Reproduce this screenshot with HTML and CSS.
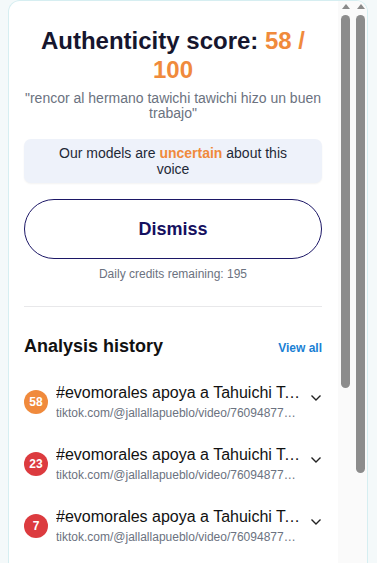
FILE: index.html
```html
<!DOCTYPE html>
<html lang="en">
<head>
  <meta charset="UTF-8">
  <meta name="viewport" content="width=device-width, initial-scale=1.0">
  <title>Authenticity score</title>
  <link rel="stylesheet" href="styles.css">
</head>
<body>
  <div class="card">
    <div class="content">
      <h1 class="score-title">Authenticity score: <span class="score">58 / 100</span></h1>
      <p class="quote">"rencor al hermano tawichi tawichi hizo un buen trabajo"</p>
      <div class="verdict">Our models are <strong>uncertain</strong> about this voice</div>
      <button class="dismiss">Dismiss</button>
      <p class="credits">Daily credits remaining: 195</p>
      <hr class="divider">
      <div class="history-head">
        <h2>Analysis history</h2>
        <a href="#" class="view-all">View all</a>
      </div>
      <ul class="history">
        <li class="item">
          <span class="badge orange">58</span>
          <div class="item-text">
            <div class="item-title">#evomorales apoya a Tahuichi Tahuichi Aguilera</div>
            <div class="item-url">tiktok.com/@jallallapueblo/video/7609487712345678901</div>
          </div>
          <svg class="chevron" width="12" height="8" viewBox="0 0 12 8"><path d="M1.5 1.5 L6 6 L10.5 1.5" fill="none" stroke="#222" stroke-width="1.4"/></svg>
        </li>
        <li class="item">
          <span class="badge red">23</span>
          <div class="item-text">
            <div class="item-title">#evomorales apoya a Tahuichi Tahuichi Aguilera</div>
            <div class="item-url">tiktok.com/@jallallapueblo/video/7609487712345678901</div>
          </div>
          <svg class="chevron" width="12" height="8" viewBox="0 0 12 8"><path d="M1.5 1.5 L6 6 L10.5 1.5" fill="none" stroke="#222" stroke-width="1.4"/></svg>
        </li>
        <li class="item">
          <span class="badge red">7</span>
          <div class="item-text">
            <div class="item-title">#evomorales apoya a Tahuichi Tahuichi Aguilera</div>
            <div class="item-url">tiktok.com/@jallallapueblo/video/7609487712345678901</div>
          </div>
          <svg class="chevron" width="12" height="8" viewBox="0 0 12 8"><path d="M1.5 1.5 L6 6 L10.5 1.5" fill="none" stroke="#222" stroke-width="1.4"/></svg>
        </li>
      </ul>
    </div>
    <div class="scrollbar">
      <span class="arrow"></span>
      <span class="thumb inner-thumb"></span>
    </div>
    <div class="scrollbar">
      <span class="arrow"></span>
      <span class="thumb outer-thumb"></span>
    </div>
  </div>
</body>
</html>
```

FILE: styles.css
```css
body {
  margin: 0;
  background-color: #f4f9fa;
  font-family: 'Liberation Sans', Arial, sans-serif;
  overflow: hidden;
}
.card {
  display: flex;
  margin-left: 8px;
  width: 360px;
  height: 563px;
  box-sizing: border-box;
  background: #fff;
  border: 1px solid #d6eef1;
  border-bottom: none;
  border-radius: 12px 12px 0 0;
  overflow: hidden;
}
.content {
  width: 329px;
  padding: 25px 16px 0 15px;
  box-sizing: border-box;
  flex-shrink: 0;
}
.score-title {
  margin: 0;
  text-align: center;
  font-size: 24px;
  line-height: 29px;
  font-weight: bold;
  color: #16162e;
}
.score {
  color: #f08a3c;
}
.quote {
  margin: 7px 0 0;
  text-align: center;
  font-size: 14px;
  line-height: 15px;
  color: #6b7280;
}
.verdict {
  margin-top: 18px;
  padding: 6px 20px;
  background: #eef2fa;
  border-radius: 7px;
  box-shadow: 0 1px 2px rgba(0, 0, 0, 0.05);
  text-align: center;
  font-size: 14px;
  line-height: 16px;
  color: #1f2937;
}
.verdict strong {
  color: #f08a3c;
}
.dismiss {
  display: block;
  width: 100%;
  height: 60px;
  margin-top: 16px;
  background: #fff;
  border: 1px solid #1c1766;
  border-radius: 30px;
  font-family: inherit;
  font-size: 18px;
  font-weight: bold;
  color: #15105f;
  cursor: pointer;
}
.credits {
  margin: 8px 0 0;
  text-align: center;
  font-size: 12px;
  line-height: 14px;
  color: #6b7280;
}
.divider {
  margin: 25px 0 0;
  border: none;
  border-top: 1px solid #e8e8ea;
}
.history-head {
  display: flex;
  justify-content: space-between;
  align-items: baseline;
  margin-top: 28px;
}
.history-head h2 {
  margin: 0;
  font-size: 18px;
  line-height: 22px;
  color: #111;
}
.view-all {
  font-size: 12px;
  font-weight: bold;
  color: #1a7fd4;
  text-decoration: none;
}
.history {
  list-style: none;
  margin: 14px 0 0;
  padding: 0;
}
.item {
  display: flex;
  align-items: center;
  height: 62px;
}
.badge {
  flex-shrink: 0;
  width: 24px;
  height: 24px;
  border-radius: 50%;
  display: flex;
  align-items: center;
  justify-content: center;
  font-size: 12px;
  font-weight: bold;
  color: #fff;
}
.orange {
  background: #f08a3c;
}
.red {
  background: #dc3b3f;
}
.item-text {
  width: 244px;
  margin-left: 8px;
  min-width: 0;
}
.item-title {
  font-size: 16px;
  line-height: 19px;
  color: #111;
  white-space: nowrap;
  overflow: hidden;
  text-overflow: ellipsis;
}
.item-url {
  margin-top: 3px;
  font-size: 12px;
  line-height: 16px;
  color: #6b7280;
  white-space: nowrap;
  overflow: hidden;
  text-overflow: ellipsis;
}
.chevron {
  margin: 0 0 9px 10px;
}
.scrollbar {
  width: 15px;
  flex-shrink: 0;
  background: #fafafa;
  display: flex;
  flex-direction: column;
  align-items: center;
}
.arrow {
  width: 0;
  height: 0;
  margin-top: 3px;
  border-left: 4px solid transparent;
  border-right: 4px solid transparent;
  border-bottom: 5px solid #8a8a8a;
}
.thumb {
  width: 9px;
  margin-top: 6px;
  border-radius: 5px;
  background: #8c8c8c;
}
.inner-thumb {
  height: 373px;
}
.outer-thumb {
  height: 458px;
}
```
